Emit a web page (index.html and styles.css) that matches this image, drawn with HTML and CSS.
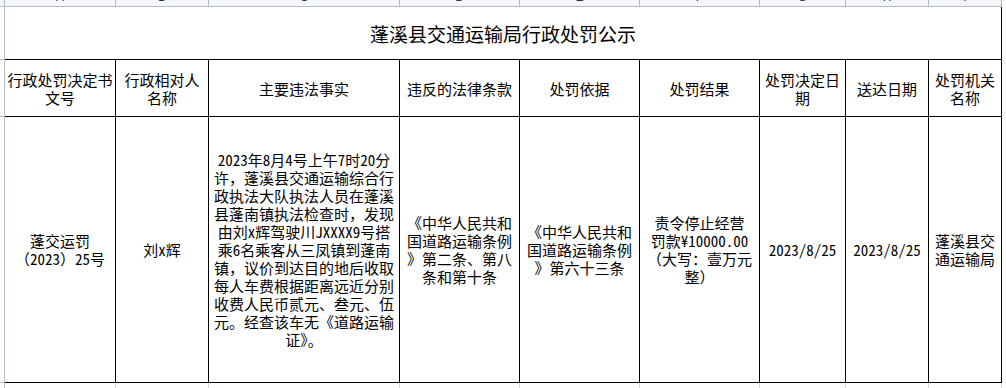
FILE: index.html
```html
<!DOCTYPE html>
<html lang="zh-CN">
<head>
<meta charset="utf-8">
<title>蓬溪县交通运输局行政处罚公示</title>
<link rel="stylesheet" href="styles.css">
</head>
<body>
<div class="sheet">
  <div class="colhead">
    <div class="corner"></div>
    <div class="letter c1"><span>A</span></div>
    <div class="letter c2"><span>B</span></div>
    <div class="letter c3"><span>C</span></div>
    <div class="letter c4"><span>D</span></div>
    <div class="letter c5"><span>E</span></div>
    <div class="letter c6"><span>F</span></div>
    <div class="letter c7"><span>G</span></div>
    <div class="letter c8"><span>H</span></div>
    <div class="letter c9"><span>I</span></div>
  </div>
  <div class="main">
    <div class="rowhead">
      <div class="rh r-title"></div>
      <div class="rh r-head"></div>
      <div class="rh r-data"></div>
    </div>
    <div class="table">
      <div class="title-row">蓬溪县交通运输局行政处罚公示</div>
      <div class="row head-row">
        <div class="cell c1">行政处罚决定书<br>文号</div>
        <div class="cell c2">行政相对人<br>名称</div>
        <div class="cell c3">主要违法事实</div>
        <div class="cell c4">违反的法律条款</div>
        <div class="cell c5">处罚依据</div>
        <div class="cell c6">处罚结果</div>
        <div class="cell c7">处罚决定日<br>期</div>
        <div class="cell c8">送达日期</div>
        <div class="cell c9">处罚机关<br>名称</div>
      </div>
      <div class="row data-row">
        <div class="cell c1">蓬交运罚<br>（2023）25号</div>
        <div class="cell c2">刘x辉</div>
        <div class="cell c3">2023年8月4号上午7时20分<br>许，蓬溪县交通运输综合行<br>政执法大队执法人员在蓬溪<br>县蓬南镇执法检查时，发现<br>由刘x辉驾驶川JXXXX9号搭<br>乘6名乘客从三凤镇到蓬南<br>镇，议价到达目的地后收取<br>每人车费根据距离远近分别<br>收费人民币贰元、叁元、伍<br>元。经查该车无《道路运输<br>证》。</div>
        <div class="cell c4">《中华人民共和<br>国道路运输条例<br>》第二条、第八<br>条和第十条</div>
        <div class="cell c5">《中华人民共和<br>国道路运输条例<br>》第六十三条</div>
        <div class="cell c6">责令停止经营<br>罚款¥10000.00<br>（大写：壹万元<br>整）</div>
        <div class="cell c7">2023/8/25</div>
        <div class="cell c8">2023/8/25</div>
        <div class="cell c9">蓬溪县交<br>通运输局</div>
      </div>
      <div class="row tail-row">
        <div class="gcell c1"></div>
        <div class="gcell c2"></div>
        <div class="gcell c3"></div>
        <div class="gcell c4"></div>
        <div class="gcell c5"></div>
        <div class="gcell c6"></div>
        <div class="gcell c7"></div>
        <div class="gcell c8"></div>
        <div class="gcell c9"></div>
      </div>
    </div>
  </div>
</div>
</body>
</html>
```
FILE: styles.css
```css
* { box-sizing: border-box; }
html, body { margin: 0; padding: 0; background: #ffffff; }
body {
  width: 1006px;
  height: 388px;
  overflow: hidden;
  font-family: "Noto Sans Mono CJK SC", "Noto Sans CJK SC", sans-serif;
  color: #000;
}
.sheet { width: 1006px; height: 388px; overflow: hidden; }

.colhead {
  display: flex;
  height: 7px;
  overflow: hidden;
}
.colhead .corner {
  width: 5px;
  height: 7px;
  background: #f5f6f9;
  border-right: 1px solid #b4bbcb;
  border-bottom: 1px solid #b4bbcb;
}
.letter {
  height: 7px;
  background: #f5f6f9;
  border-right: 1px solid #b4bbcb;
  border-bottom: 1px solid #b4bbcb;
  text-align: center;
  overflow: hidden;
  font-family: "Liberation Sans", sans-serif;
  font-size: 12px;
  color: #2a3350;
}
.letter span { display: block; line-height: 12px; margin-top: -9px; }

.c1 { width: 111px; }
.c2 { width: 93px; }
.c3 { width: 191px; }
.c4 { width: 120px; }
.c5 { width: 120px; }
.c6 { width: 120px; }
.c7 { width: 86px; }
.c8 { width: 83px; }
.c9 { width: 73px; }

.main { display: flex; }
.rowhead {
  width: 5px;
  flex: none;
  border-right: 1px solid #b4bbcb;
  height: 381px;
}
.rh { border-bottom: 1px solid #b4bbcb; }
.r-title { height: 53px; }
.r-head { height: 57px; }
.r-data { height: 266px; }

.table { display: flex; flex-direction: column; width: 997px; }
.title-row {
  height: 53px;
  border-right: 1px solid #000;
  border-bottom: 1px solid #000;
  display: flex;
  align-items: center;
  justify-content: center;
  font-size: 19px;
  line-height: 22px;
  padding-top: 2px;
}
.row { display: flex; }
.cell {
  border-right: 1px solid #000;
  border-bottom: 1px solid #000;
  display: flex;
  align-items: center;
  justify-content: center;
  text-align: center;
  font-size: 15px;
  line-height: 18px;
  white-space: nowrap;
}
.head-row .cell { height: 57px; padding-top: 1px; }
.data-row .cell { height: 266px; padding-top: 1px; }
.tail-row .gcell {
  height: 10px;
  border-right: 1px solid #d3d8e2;
}
```
